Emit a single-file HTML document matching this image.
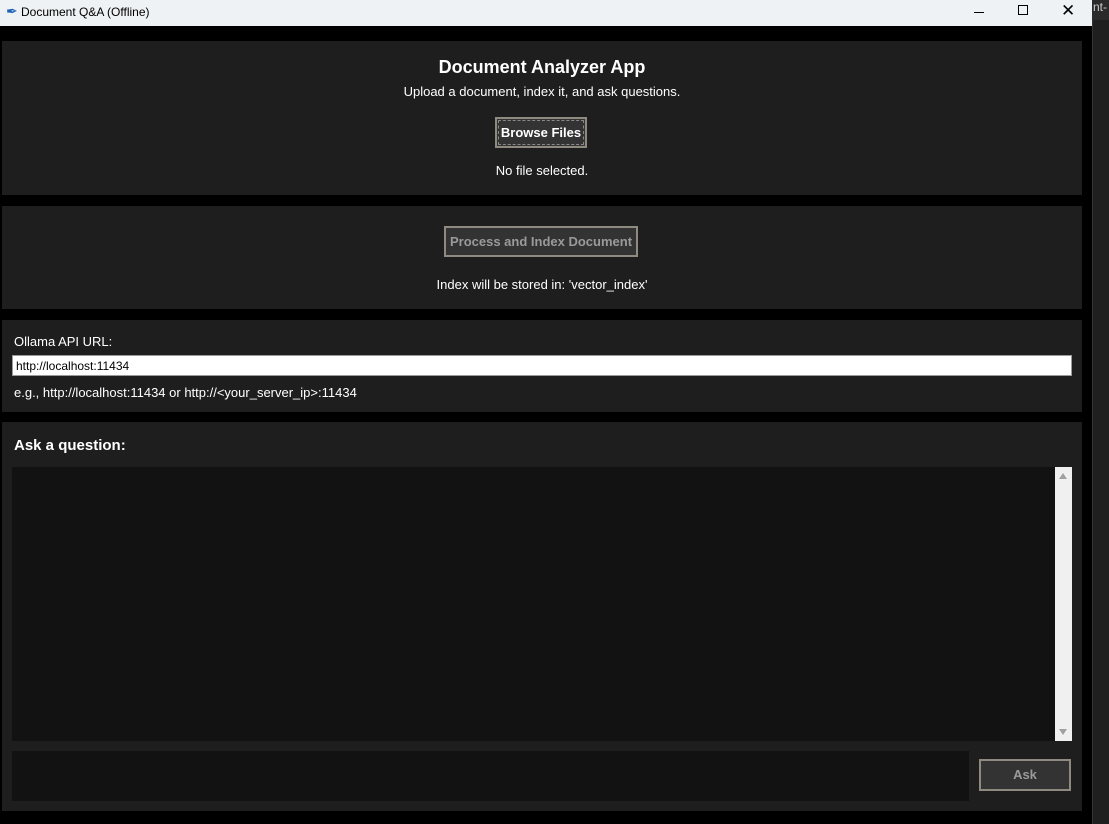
<!DOCTYPE html>
<html><head><meta charset="utf-8"><style>
*{margin:0;padding:0;box-sizing:border-box}
body{width:1109px;height:824px;background:#000;position:relative;overflow:hidden;font-family:"Liberation Sans","DejaVu Sans",sans-serif;font-size:13px;color:#fff}
.a{position:absolute}
.p{position:absolute;background:#1e1e1e;left:2px;width:1080px}
.c{position:absolute;left:0;width:100%;text-align:center}
.btn{position:absolute;background:#333;border:2px solid #8f8a80;font-weight:bold;font-size:13px;text-align:center}
</style></head><body>
<div class="a" style="left:0;top:0;width:1092px;height:26px;background:#eef2f5"></div>
<div class="a" style="left:6px;top:3px;font-size:14px;color:#1a5fb4">&#10002;</div>
<div class="a" style="left:21px;top:5px;font-size:12px;color:#000">Document Q&amp;A (Offline)</div>
<div class="a" style="left:974px;top:12px;width:10px;height:1px;background:#000"></div>
<div class="a" style="left:1018px;top:5px;width:10px;height:10px;border:1px solid #000"></div>
<div class="a" style="left:1061px;top:1px;font-size:17px;color:#000">&#x2715;</div>
<div class="a" style="left:1092px;top:0;width:17px;height:824px;background:#1f1f1f;border-left:1px solid #333"></div>
<div class="a" style="left:1092px;top:0;width:17px;height:20px;background:#2b2b2b;color:#ccc;font-size:12px;overflow:hidden;padding-left:1px">nt-</div>

<div class="p" style="top:41px;height:154px">
 <div class="c" style="top:16px;font-size:18px;font-weight:bold">Document Analyzer App</div>
 <div class="c" style="top:43px">Upload a document, index it, and ask questions.</div>
 <div class="btn" style="left:493px;top:76px;width:92px;height:31px;line-height:27px;outline:1px dashed #888;outline-offset:-4px">Browse Files</div>
 <div class="c" style="top:122px">No file selected.</div>
</div>
<div class="p" style="top:206px;height:103px">
 <div class="btn" style="left:442px;top:20px;width:194px;height:31px;line-height:27px;color:#9a9a9a">Process and Index Document</div>
 <div class="c" style="top:71px">Index will be stored in: 'vector_index'</div>
</div>
<div class="p" style="top:320px;height:92px">
 <div class="a" style="left:12px;top:14px">Ollama API URL:</div>
 <div class="a" style="left:10px;top:35px;width:1060px;height:21px;background:#fff;border:1px solid #999;color:#000;font-size:12px;padding:3px 3px">http://localhost:11434</div>
 <div class="a" style="left:12px;top:65px">e.g., http://localhost:11434 or http://&lt;your_server_ip&gt;:11434</div>
</div>
<div class="p" style="top:422px;height:389px">
 <div class="a" style="left:12px;top:15px;font-size:15px;font-weight:bold">Ask a question:</div>
 <div class="a" style="left:10px;top:45px;width:1043px;height:274px;background:#121212"></div>
 <div class="a" style="left:1053px;top:45px;width:17px;height:274px;background:#f0f0f0">
  <div class="a" style="left:4px;top:6px;border-left:4.5px solid transparent;border-right:4.5px solid transparent;border-bottom:6px solid #a0a0a0"></div>
  <div class="a" style="left:4px;top:262px;border-left:4.5px solid transparent;border-right:4.5px solid transparent;border-top:6px solid #a0a0a0"></div>
 </div>
 <div class="a" style="left:10px;top:329px;width:957px;height:50px;background:#121212"></div>
 <div class="btn" style="left:977px;top:337px;width:92px;height:32px;line-height:28px;color:#9a9a9a">Ask</div>
</div>
</body></html>
